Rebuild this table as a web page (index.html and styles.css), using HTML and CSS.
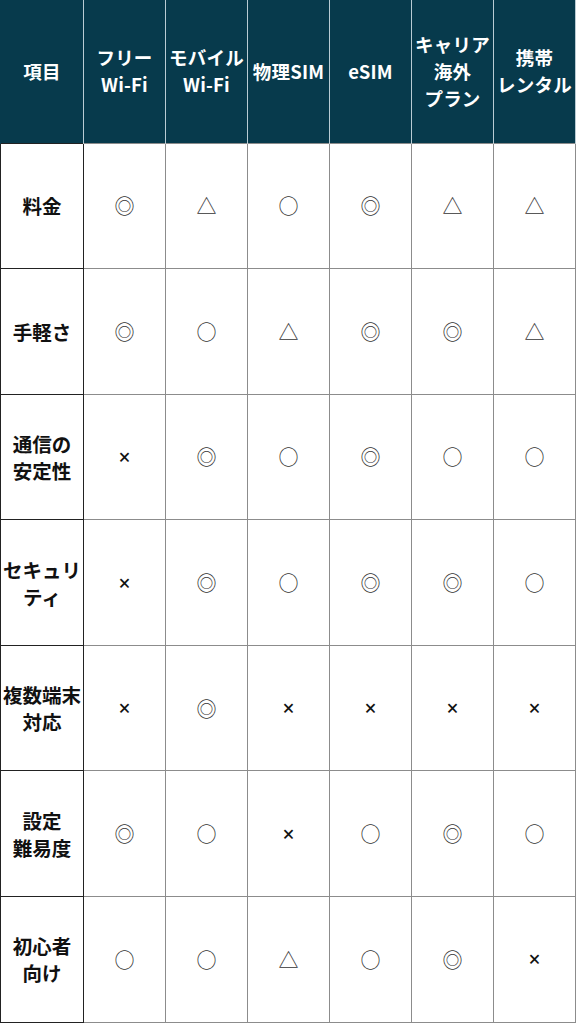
FILE: index.html
```html
<!DOCTYPE html>
<html lang="ja">

<head>
  <meta charset="UTF-8" />
  <meta name="viewport" content="width=device-width, initial-scale=1.0" />
  <title>海外ネット接続 比較表</title>
  <link rel="stylesheet" href="styles.css">
</head>

<body>
  <!-- Comparison table -->
  <table class="compare">
    <colgroup>
      <col class="col-label">
      <col class="col-item">
      <col class="col-item">
      <col class="col-item">
      <col class="col-item">
      <col class="col-item">
      <col class="col-item">
    </colgroup>
    <thead>
      <tr>
        <th>項目</th>
        <th>フリー<br>Wi-Fi</th>
        <th>モバイル<br>Wi-Fi</th>
        <th>物理SIM</th>
        <th>eSIM</th>
        <th>キャリア<br>海外<br>プラン</th>
        <th>携帯<br>レンタル</th>
      </tr>
    </thead>
    <tbody>
      <tr>
        <th>料金</th>
        <td>◎</td><td>△</td><td>○</td><td>◎</td><td>△</td><td>△</td>
      </tr>
      <tr>
        <th>手軽さ</th>
        <td>◎</td><td>○</td><td>△</td><td>◎</td><td>◎</td><td>△</td>
      </tr>
      <tr>
        <th>通信の<br>安定性</th>
        <td class="x">×</td><td>◎</td><td>○</td><td>◎</td><td>○</td><td>○</td>
      </tr>
      <tr>
        <th>セキュリ<br>ティ</th>
        <td class="x">×</td><td>◎</td><td>○</td><td>◎</td><td>◎</td><td>○</td>
      </tr>
      <tr>
        <th>複数端末<br>対応</th>
        <td class="x">×</td><td>◎</td><td class="x">×</td><td class="x">×</td><td class="x">×</td><td class="x">×</td>
      </tr>
      <tr>
        <th>設定<br>難易度</th>
        <td>◎</td><td>○</td><td class="x">×</td><td>○</td><td>◎</td><td>○</td>
      </tr>
      <tr>
        <th>初心者<br>向け</th>
        <td>○</td><td>○</td><td>△</td><td>○</td><td>◎</td><td class="x">×</td>
      </tr>
    </tbody>
  </table>
</body>

</html>
```

FILE: styles.css
```css
* {
  margin: 0;
  padding: 0;
  box-sizing: border-box;
}

body {
  background-color: #ffffff;
  font-family: "Noto Sans CJK JP", "Noto Sans", sans-serif;
  color: #111111;
}

/* Table */
.compare {
  width: 576px;
  table-layout: fixed;
  border-collapse: collapse;
}

.col-label {
  width: 83px;
}

.col-item {
  width: 82px;
}

.compare thead th {
  height: 143px;
  background-color: #073a4c;
  color: #ffffff;
  font-size: 18.5px;
  font-weight: 700;
  line-height: 27px;
  text-align: center;
  vertical-align: middle;
  border-left: 1px solid #b9cbd3;
  border-right: 1px solid #b9cbd3;
  white-space: nowrap;
  letter-spacing: 0.2px;
}

.compare thead th:first-child {
  border-left: 1px solid #073a4c;
}

.compare tbody th,
.compare tbody td {
  height: 125.6px;
  text-align: center;
  vertical-align: middle;
  border: 1px solid #8c8c8c;
}

.compare tbody th {
  font-size: 19.5px;
  font-weight: 700;
  line-height: 27px;
  color: #111111;
  border: 1px solid #222222;
  white-space: nowrap;
}

.compare tbody td {
  font-size: 20px;
  font-weight: 400;
  color: #333333;
}

.compare tbody td.x {
  font-family: "Noto Sans", sans-serif;
  font-size: 21px;
  font-weight: 500;
  color: #111111;
}
```
